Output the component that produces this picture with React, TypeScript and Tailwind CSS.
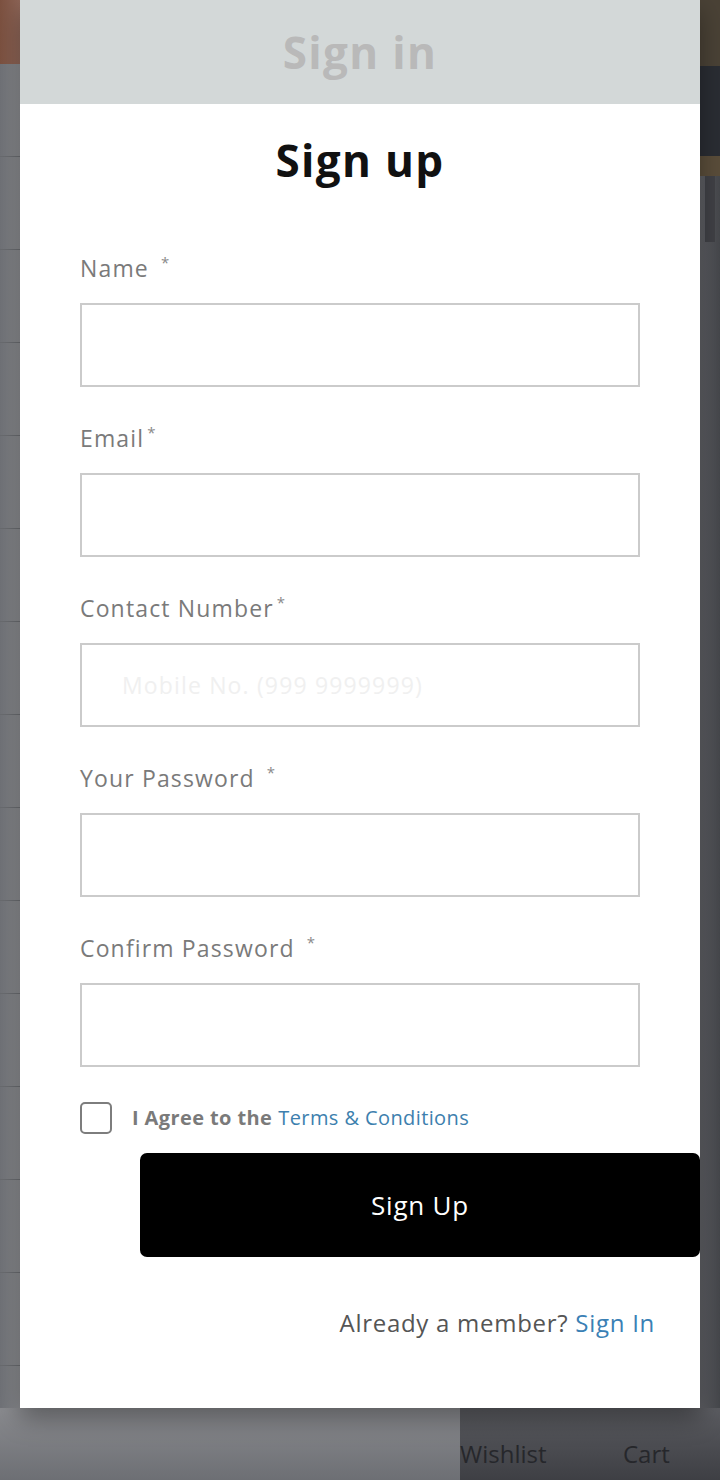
import React from "react"

const font = { fontFamily: '"Open Sans", "Noto Sans", sans-serif' }

interface FieldProps {
  label: string
  gap?: string
  placeholder?: string
}

function Field({ label, gap = "ml-[10px]", placeholder }: FieldProps) {
  return (
    <div className="flex flex-col mb-[36px]">
      <label className="flex items-start h-[30px] text-[23px] leading-[30px] tracking-[0.05em] text-[#7a7a7a]">
        <span>{label}</span>
        <span className={`${gap} text-[15px] leading-[18px] text-[#8a8a8a]`}>*</span>
      </label>
      <div className="mt-[20px] h-[84px] border-2 border-[#cbcbcb] bg-white flex items-center">
        {placeholder && (
          <span className="pl-[40px] text-[23px] tracking-[0.05em] text-[#f0f0f0]">{placeholder}</span>
        )}
      </div>
    </div>
  )
}

export default function App() {
  return (
    <div className="w-[720px] h-[1480px] overflow-hidden flex flex-col bg-[#6d6f74]" style={font}>
      <div className="flex h-[1408px]">
        {/* left page strip */}
        <div className="w-[20px] flex flex-col bg-gradient-to-r from-[#707277] to-[#8a8b8f]">
          <div className="h-[64px] bg-gradient-to-r from-[#7c5140] to-[#8f6658]"></div>
          {Array.from({ length: 14 }).map((_, i) => (
            <div key={i} className="h-[93px] border-b border-[#6a6c70]"></div>
          ))}
        </div>

        {/* modal */}
        <div className="w-[680px] flex flex-col bg-white shadow-[0_10px_24px_rgba(0,0,0,0.35)] z-10">
          <div className="h-[104px] bg-[#d3d8d8] flex items-center justify-center">
            <span className="text-[44px] font-bold text-[#b9b9b9] tracking-[0.03em]">Sign in</span>
          </div>
          <div className="flex flex-col px-[60px]">
            <h1 className="mt-[28px] h-[56px] text-center text-[44px] leading-[56px] font-bold text-[#111] tracking-[0.03em]">
              Sign up
            </h1>
            <div className="mt-[65px] flex flex-col">
              <Field label="Name" gap="ml-[12px]" />
              <Field label="Email" gap="ml-[3px]" />
              <Field label="Contact Number" gap="ml-[3px]" placeholder="Mobile No. (999 9999999)" />
              <Field label="Your Password" gap="ml-[12px]" />
              <Field label="Confirm Password" gap="ml-[12px]" />
            </div>
            <div className="-mt-[1px] flex items-center h-[32px] tracking-[0.025em]">
              <div className="w-[32px] h-[32px] border-2 border-[#7d7d7d] rounded-[5px]"></div>
              <span className="ml-[20px] text-[20px] font-bold text-[#7a7a7a]">I Agree to the</span>
              <span className="ml-[6px] text-[20px] text-[#3d7fae]">Terms &amp; Conditions</span>
            </div>
            <button className="mt-[19px] ml-[60px] -mr-[60px] h-[104px] bg-black rounded-[7px] text-white text-[26px] tracking-[0.03em]">
              Sign Up
            </button>
            <div className="mt-[48px] -mr-[15px] text-right text-[24px] tracking-[0.03em] text-[#555]">
              Already a member? <span className="text-[#3a80b5]">Sign In</span>
            </div>
          </div>
        </div>

        {/* right page strip */}
        <div className="w-[20px] flex flex-col bg-gradient-to-r from-[#5f6065] to-[#45474b]">
          <div className="h-[66px] bg-[#4a4236]"></div>
          <div className="h-[90px] bg-[#2a2d33]"></div>
          <div className="h-[20px] bg-[#5a4d3a]"></div>
          <div className="h-[66px] mx-[5px] bg-[#404146]"></div>
        </div>
      </div>

      {/* page below the modal */}
      <div className="flex h-[72px]">
        <div className="w-[460px] bg-gradient-to-b from-[#8a8b8f] to-[#6d6f74]"></div>
        <div className="flex-1 flex items-end pb-[8px] bg-gradient-to-b from-[#5b5c61] to-[#3e3f44] text-[24px] text-[#26272b]">
          <span className="w-[163px]">Wishlist</span>
          <span>Cart</span>
        </div>
      </div>
    </div>
  )
}
